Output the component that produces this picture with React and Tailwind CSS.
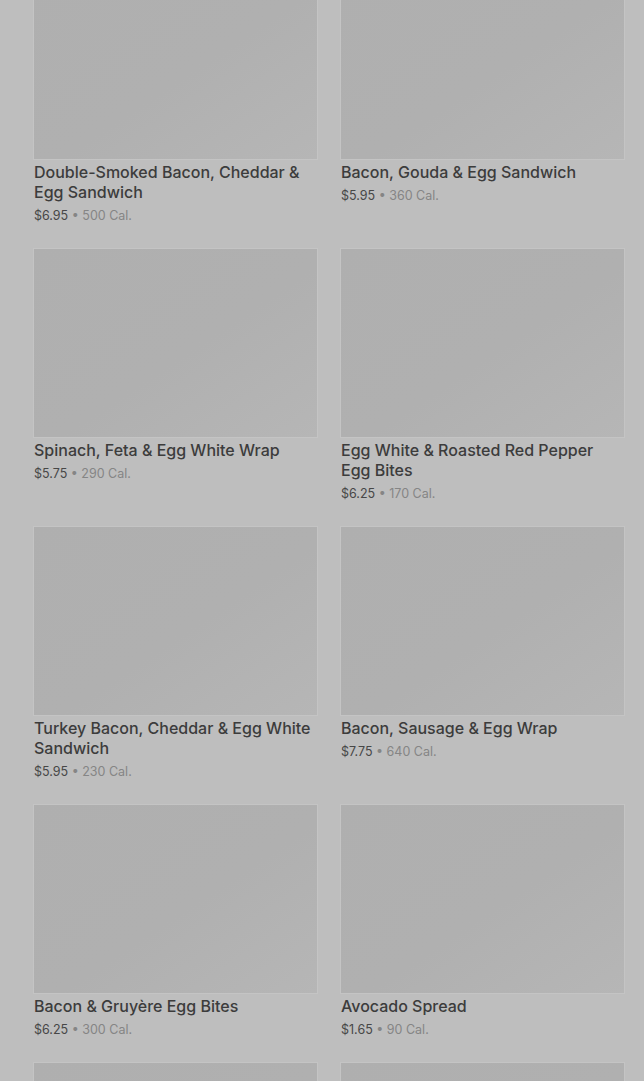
const items = [
  { name: "Double-Smoked Bacon, Cheddar & Egg Sandwich", price: "$6.95", cal: "500 Cal." },
  { name: "Bacon, Gouda & Egg Sandwich", price: "$5.95", cal: "360 Cal." },
  { name: "Spinach, Feta & Egg White Wrap", price: "$5.75", cal: "290 Cal." },
  { name: "Egg White & Roasted Red Pepper Egg Bites", price: "$6.25", cal: "170 Cal." },
  { name: "Turkey Bacon, Cheddar & Egg White Sandwich", price: "$5.95", cal: "230 Cal." },
  { name: "Bacon, Sausage & Egg Wrap", price: "$7.75", cal: "640 Cal." },
  { name: "Bacon & Gruyère Egg Bites", price: "$6.25", cal: "300 Cal." },
  { name: "Avocado Spread", price: "$1.65", cal: "90 Cal." },
  { name: "Potato, Cheddar & Chive Bakes", price: "$3.95", cal: "420 Cal." },
  { name: "Impossible™ Breakfast Sandwich", price: "$6.45", cal: "420 Cal." },
];

function MenuCard({ item }) {
  return (
    <div className="flex flex-col">
      {/* image placeholder, still loading */}
      <div className="h-[188px] w-full bg-gradient-to-br from-[#afafaf] via-[#b0b0b0] via-55% to-[#b6b6b6] shadow-[0_0_0_1px_#c4c4c4]" />
      <p className="mt-[3px] text-[16px] leading-[20px] font-medium text-[#3c3c3c]">
        {item.name}
      </p>
      <p className="mt-[5px] text-[12.5px] leading-[18px] text-[#474747]">
        {item.price}
        <span className="text-[#858585]"> • {item.cal}</span>
      </p>
    </div>
  );
}

export default function App() {
  return (
    <div
      className="h-screen overflow-hidden bg-[#bebebe]"
      style={{ fontFamily: "Inter, 'Noto Sans', sans-serif" }}
    >
      <div className="-mt-[29px] grid grid-cols-2 gap-x-6 gap-y-6 pl-[34px] pr-[20px]">
        {items.map((item) => (
          <MenuCard key={item.name} item={item} />
        ))}
      </div>
    </div>
  );
}
